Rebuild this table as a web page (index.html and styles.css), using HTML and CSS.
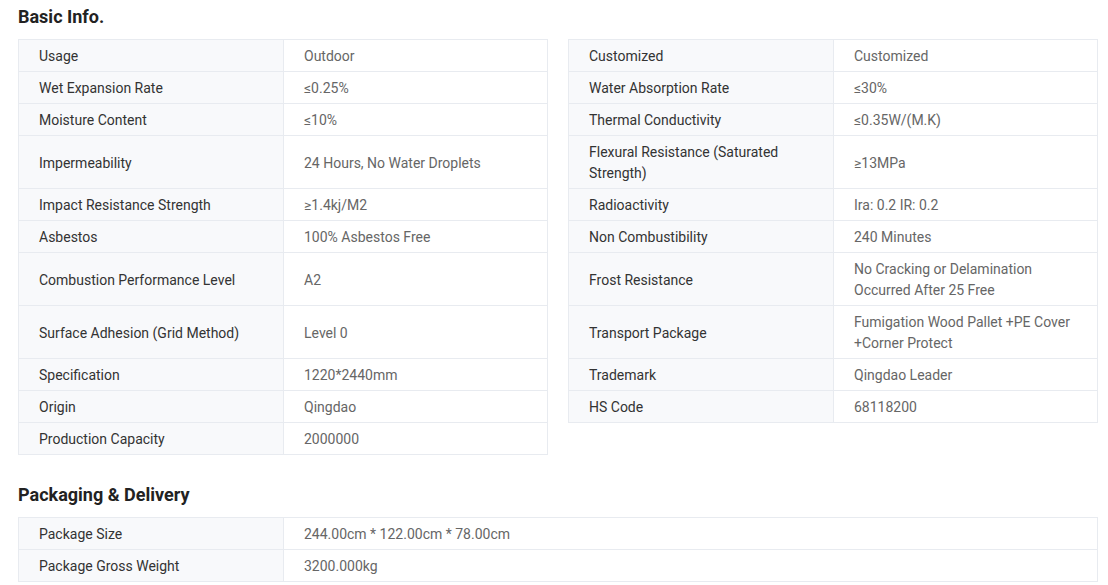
FILE: index.html
```html
<!DOCTYPE html>
<html>
<head>
<meta charset="utf-8">
<link rel="stylesheet" href="styles.css">
</head>
<body>
<div class="page">
  <h2 class="title">Basic Info.</h2>
  <div class="pair">
    <table class="spec">
      <tr><th>Usage</th><td>Outdoor</td></tr>
      <tr><th>Wet Expansion Rate</th><td>≤0.25%</td></tr>
      <tr><th>Moisture Content</th><td>≤10%</td></tr>
      <tr class="tall"><th>Impermeability</th><td>24 Hours, No Water Droplets</td></tr>
      <tr><th>Impact Resistance Strength</th><td>≥1.4kj/M2</td></tr>
      <tr><th>Asbestos</th><td>100% Asbestos Free</td></tr>
      <tr class="tall"><th>Combustion Performance Level</th><td>A2</td></tr>
      <tr class="tall"><th>Surface Adhesion (Grid Method)</th><td>Level 0</td></tr>
      <tr><th>Specification</th><td>1220*2440mm</td></tr>
      <tr><th>Origin</th><td>Qingdao</td></tr>
      <tr><th>Production Capacity</th><td>2000000</td></tr>
    </table>
    <table class="spec">
      <tr><th>Customized</th><td>Customized</td></tr>
      <tr><th>Water Absorption Rate</th><td>≤30%</td></tr>
      <tr><th>Thermal Conductivity</th><td>≤0.35W/(M.K)</td></tr>
      <tr class="tall"><th>Flexural Resistance (Saturated Strength)</th><td>≥13MPa</td></tr>
      <tr><th>Radioactivity</th><td>Ira: 0.2 IR: 0.2</td></tr>
      <tr><th>Non Combustibility</th><td>240 Minutes</td></tr>
      <tr class="tall"><th>Frost Resistance</th><td>No Cracking or Delamination Occurred After 25 Free</td></tr>
      <tr class="tall"><th>Transport Package</th><td>Fumigation Wood Pallet +PE Cover +Corner Protect</td></tr>
      <tr><th>Trademark</th><td>Qingdao Leader</td></tr>
      <tr><th>HS Code</th><td>68118200</td></tr>
    </table>
  </div>
  <h2 class="title second">Packaging &amp; Delivery</h2>
  <table class="spec full">
    <tr><th>Package Size</th><td>244.00cm * 122.00cm * 78.00cm</td></tr>
    <tr><th>Package Gross Weight</th><td>3200.000kg</td></tr>
  </table>
</div>
</body>
</html>
```
FILE: styles.css
```css
* { box-sizing: border-box; }
html, body { margin: 0; padding: 0; background: #fff; }
body { font-family: Roboto, "Liberation Sans", Arial, sans-serif; }
.page { padding: 5px 10px 0 18px; }
.title {
  margin: 0 0 10px 0;
  font-size: 18px;
  line-height: 24px;
  font-weight: 700;
  color: #222;
}
.title.second { margin-top: 28px; margin-bottom: 10px; }
.pair { display: flex; gap: 20px; align-items: flex-start; }
.spec {
  width: 530px;
  table-layout: fixed;
  border-collapse: collapse;
  font-size: 14px;
  line-height: 21px;
}
.spec.full { width: 1080px; }
.spec th, .spec td {
  border: 1px solid #e8ebf0;
  padding: 6px 20px 4px 20px;
  text-align: left;
  vertical-align: middle;
  font-weight: 400;
}
.spec th { width: 265px; background: #f8f9fb; color: #333; }
.spec td { color: #666; }
.spec tr.tall th, .spec tr.tall td { height: 53px; }
```
